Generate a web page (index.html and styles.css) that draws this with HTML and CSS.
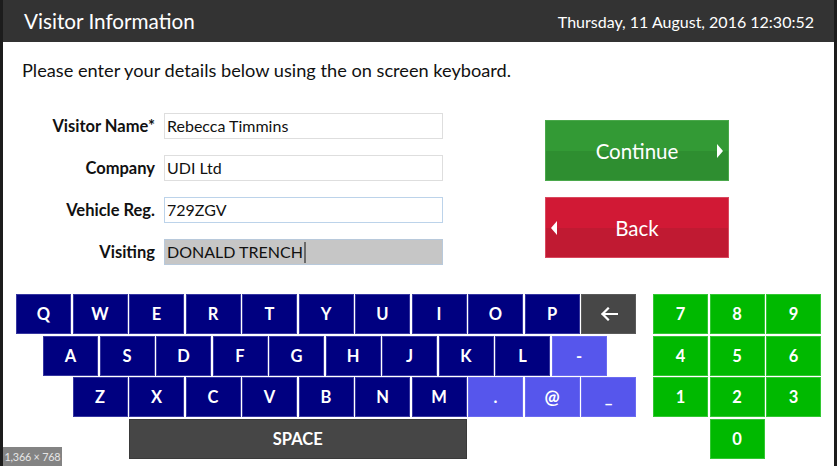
FILE: index.html
```html
<!DOCTYPE html>
<html lang="en">
<head>
<meta charset="utf-8">
<title>Visitor Information</title>
<link rel="stylesheet" href="styles.css">
</head>
<body>
<div class="screen">
  <header class="topbar">
    <h1 class="title">Visitor Information</h1>
    <div class="clock">Thursday, 11 August, 2016 12:30:52</div>
  </header>
  <p class="intro">Please enter your details below using the on screen keyboard.</p>
  <div class="main">
    <div class="form">
      <div class="label">Visitor Name*</div><div class="field">Rebecca Timmins</div>
      <div class="label">Company</div><div class="field">UDI Ltd</div>
      <div class="label">Vehicle Reg.</div><div class="field field-focus">729ZGV</div>
      <div class="label">Visiting</div><div class="field field-selected">DONALD TRENCH<span class="caret"></span></div>
    </div>
    <div class="actions">
      <div class="btn btn-continue"><span>Continue</span><i class="tri tri-right"></i></div>
      <div class="btn btn-back"><i class="tri tri-left"></i><span>Back</span></div>
    </div>
  </div>
  <div class="keyboard">
    <div class="letters">
      <div class="row">
        <div class="key">Q</div><div class="key">W</div><div class="key">E</div><div class="key">R</div><div class="key">T</div><div class="key">Y</div><div class="key">U</div><div class="key">I</div><div class="key">O</div><div class="key">P</div>
        <div class="key key-dark"><svg width="18" height="14" viewBox="0 0 18 14"><path d="M17 7H2.5M8 1.5L2.5 7L8 12.5" fill="none" stroke="#fff" stroke-width="2.2" stroke-linecap="square"/></svg></div>
      </div>
      <div class="row row-2">
        <div class="key">A</div><div class="key">S</div><div class="key">D</div><div class="key">F</div><div class="key">G</div><div class="key">H</div><div class="key">J</div><div class="key">K</div><div class="key">L</div><div class="key key-light">-</div>
      </div>
      <div class="row row-3">
        <div class="key">Z</div><div class="key">X</div><div class="key">C</div><div class="key">V</div><div class="key">B</div><div class="key">N</div><div class="key">M</div><div class="key key-light">.</div><div class="key key-light key-at">@</div><div class="key key-light">_</div>
      </div>
      <div class="row row-4">
        <div class="key key-space">SPACE</div>
      </div>
    </div>
    <div class="numpad">
      <div class="key key-num">7</div><div class="key key-num">8</div><div class="key key-num">9</div>
      <div class="key key-num">4</div><div class="key key-num">5</div><div class="key key-num">6</div>
      <div class="key key-num">1</div><div class="key key-num">2</div><div class="key key-num">3</div>
      <div class="key key-num key-zero">0</div>
    </div>
  </div>
  <div class="badge">1,366 × 768</div>
</div>
</body>
</html>
```
FILE: styles.css
```css
html, body {
  margin: 0;
  padding: 0;
  background: #1c1c1c;
}
body {
  width: 837px;
  height: 466px;
  overflow: hidden;
  font-family: Lato, "Open Sans", sans-serif;
}
.screen {
  position: relative;
  margin-left: 3px;
  width: 831px;
  height: 466px;
  background: #ffffff;
  overflow: hidden;
}
.topbar {
  height: 42px;
  background: #333333;
  color: #ffffff;
  display: flex;
  align-items: center;
  justify-content: space-between;
  padding: 0 20px 0 21px;
  box-sizing: border-box;
}
.title {
  margin: 0;
  font-size: 20.7px;
  font-weight: 400;
}
.clock {
  font-size: 16px;
}
.intro {
  margin: 0;
  height: 58px;
  box-sizing: border-box;
  padding: 16px 0 0 19px;
  line-height: 24px;
  font-size: 18.2px;
  color: #111;
}
.main {
  display: flex;
  margin-top: 13px;
  height: 152px;
}
.form {
  display: grid;
  grid-template-columns: 152px 279px;
  column-gap: 9px;
  grid-auto-rows: 26px;
  row-gap: 16px;
}
.label {
  font-weight: 700;
  font-size: 16.5px;
  text-align: right;
  line-height: 26px;
  color: #111;
}
.field {
  border: 1px solid #dedede;
  box-sizing: border-box;
  font-size: 16px;
  line-height: 24px;
  padding-left: 2px;
  color: #111;
  display: flex;
  align-items: center;
  white-space: nowrap;
}
.field-focus {
  border-color: #bcd3ea;
}
.field-selected {
  background: #c6c6c6;
  border-color: #b8c9db;
}
.caret {
  display: inline-block;
  width: 2px;
  height: 21px;
  background: #6a6a6a;
  margin-left: 1px;
}
.actions {
  margin-left: 102px;
  margin-top: 7px;
  display: flex;
  flex-direction: column;
  gap: 16px;
}
.btn {
  width: 184px;
  height: 61px;
  box-sizing: border-box;
  color: #fff;
  font-size: 20.5px;
  display: flex;
  align-items: center;
  justify-content: center;
  position: relative;
}
.btn-continue {
  background: linear-gradient(#339a35 0%, #339a35 50%, #2e8e30 50%, #2e8e30 100%);
  border: 1px solid #4aa84b;
}
.btn-back {
  background: linear-gradient(#d11935 0%, #d11935 50%, #c01a32 50%, #c01a32 100%);
  border: 1px solid #d9485e;
}
.tri {
  position: absolute;
  top: 50%;
  width: 0;
  height: 0;
  margin-top: -7px;
  border-top: 7px solid transparent;
  border-bottom: 7px solid transparent;
}
.tri-right {
  right: 5px;
  border-left: 6.5px solid #fff;
}
.tri-left {
  left: 5px;
  border-right: 6.5px solid #fff;
}
.keyboard {
  display: flex;
  margin-top: 29px;
  margin-left: 13px;
  gap: 17px;
}
.letters {
  display: flex;
  flex-direction: column;
  gap: 1.5px;
}
.row {
  display: flex;
  gap: 1.5px;
}
.row-2 { margin-left: 27px; }
.row-3 { margin-left: 56.5px; }
.row-4 { margin-left: 113px; margin-top: 0.5px; }
.key {
  width: 55px;
  height: 40px;
  box-sizing: border-box;
  background: #000080;
  color: #fff;
  font-weight: 700;
  font-size: 16.5px;
  display: flex;
  align-items: center;
  justify-content: center;
  box-shadow: inset 0 0 0 1px rgba(120, 120, 200, 0.45);
}
.key-dark {
  background: #474747;
  box-shadow: inset 0 0 0 1px #5a5a5a;
}
.key-light {
  background: #5656ec;
  box-shadow: inset 0 0 0 1px #6b6bf0;
}
.key-at {
  font-size: 18px;
}
.key-space {
  width: 337.5px;
  background: #464646;
  box-shadow: inset 0 0 0 1px #3a3a3a;
  font-size: 16.5px;
}
.numpad {
  display: grid;
  grid-template-columns: repeat(3, 55px);
  grid-auto-rows: 40px;
  gap: 1.5px;
  align-content: start;
}
.key-num {
  background: #00b900;
  box-shadow: inset 0 0 0 1px #33c733;
}
.key-zero {
  grid-column: 2;
}
.badge {
  position: absolute;
  left: 0;
  bottom: 0;
  width: 59px;
  height: 19px;
  background: rgba(120, 120, 120, 0.92);
  color: #e6e6e6;
  font-size: 10.8px;
  letter-spacing: -0.2px;
  line-height: 19px;
  text-align: center;
  white-space: nowrap;
  font-family: Lato, sans-serif;
}
```
